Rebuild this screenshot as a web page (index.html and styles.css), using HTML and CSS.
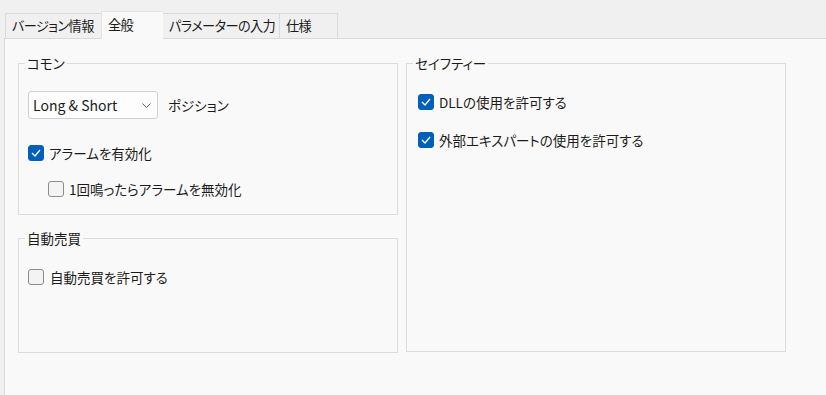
FILE: index.html
```html
<!DOCTYPE html>
<html lang="ja">
<head>
    <meta charset="UTF-8">
    <title>全般</title>
    <link rel="stylesheet" href="styles.css">
</head>
<body>
    <div class="tabs">
        <div class="tab tab-version">バージョン情報</div>
        <div class="tab tab-general active">全般</div>
        <div class="tab tab-params">パラメーターの入力</div>
        <div class="tab tab-spec">仕様</div>
    </div>
    <div class="panel">
        <div class="columns">
            <div class="left">
                <fieldset class="group group-common">
                    <legend>コモン</legend>
                    <div class="combo-row">
                        <div class="combo">
                            <span>Long &amp; Short</span>
                            <svg class="chevron" width="9" height="5" viewBox="0 0 9 5"><polyline points="0.5,0.5 4.5,4.5 8.5,0.5" fill="none" stroke="#606060" stroke-width="1"/></svg>
                        </div>
                        <span class="combo-label">ポジション</span>
                    </div>
                    <label class="check check-alarm"><span class="box checked"><svg width="10" height="8" viewBox="0 0 10 8"><polyline points="1,4 4,7 9,1" fill="none" stroke="#fff" stroke-width="1.3"/></svg></span>アラームを有効化</label>
                    <label class="check check-once"><span class="box"></span>1回鳴ったらアラームを無効化</label>
                </fieldset>
                <fieldset class="group group-auto">
                    <legend>自動売買</legend>
                    <label class="check check-auto"><span class="box"></span>自動売買を許可する</label>
                </fieldset>
            </div>
            <fieldset class="group group-safety">
                <legend>セイフティー</legend>
                <label class="check check-dll"><span class="box checked"><svg width="10" height="8" viewBox="0 0 10 8"><polyline points="1,4 4,7 9,1" fill="none" stroke="#fff" stroke-width="1.3"/></svg></span>DLLの使用を許可する</label>
                <label class="check check-expert"><span class="box checked"><svg width="10" height="8" viewBox="0 0 10 8"><polyline points="1,4 4,7 9,1" fill="none" stroke="#fff" stroke-width="1.3"/></svg></span>外部エキスパートの使用を許可する</label>
            </fieldset>
        </div>
    </div>
</body>
</html>
```

FILE: styles.css
```css
body {
    margin: 0;
    background-color: #f0f0f0;
    font-family: "Noto Sans CJK JP", "Noto Sans", sans-serif;
    font-size: 13.5px;
    font-feature-settings: "palt";
    color: #1b1b1b;
    height: 395px;
    overflow: hidden;
}

.tabs {
    display: flex;
    align-items: flex-end;
    padding: 11px 0 0 5px;
    height: 27px;
}

.tab {
    box-sizing: border-box;
    height: 25px;
    line-height: 23px;
    padding-left: 6px;
    border: 1px solid #d9d9d9;
    border-bottom: none;
    border-right: none;
    background-color: #f0f0f0;
    white-space: nowrap;
    overflow: hidden;
    font-size: 13.2px;
    letter-spacing: -0.6px;
}

.tab:last-child {
    border-right: 1px solid #d9d9d9;
}

.tab-version { width: 96px; }
.tab-general { width: 62px; }
.tab-params { width: 116px; }
.tab-spec { width: 59px; }

.tab.active {
    height: 28px;
    line-height: 25px;
    background-color: #f9f9f9;
    border-color: #e3e3e3;
    margin-bottom: -1px;
    position: relative;
}

.tab.active + .tab {
    border-left: none;
}

.panel {
    box-sizing: border-box;
    background-color: #f9f9f9;
    border-top: 1px solid #d9d9d9;
    border-left: 1px solid #d9d9d9;
    margin-left: 4px;
    height: 357px;
    padding: 14px 0 0 13px;
}

.columns {
    display: flex;
    gap: 8px;
    align-items: stretch;
}

.left {
    display: flex;
    flex-direction: column;
    gap: 13px;
}

.group {
    box-sizing: border-box;
    width: 380px;
    margin: 0;
    padding: 0 0 0 9px;
    border: 1px solid #dcdcdc;
    min-width: 0;
}

.group legend {
    margin-left: -3px;
    padding: 0 2px;
    line-height: 20px;
}

.group-common {
    padding-bottom: 15px;
}

.group-auto {
    height: 125px;
}

.group-safety {
    height: 299px;
}

.combo-row {
    display: flex;
    align-items: center;
    margin-top: 18px;
}

.combo {
    box-sizing: border-box;
    width: 130px;
    height: 28px;
    display: flex;
    align-items: center;
    justify-content: space-between;
    padding: 0 6px 0 4px;
    border: 1px solid #d0d0d0;
    border-radius: 3px;
    background-color: #fdfdfd;
    font-size: 14px;
    font-feature-settings: normal;
}

.chevron {
    margin-top: 1px;
}

.combo-label {
    margin-left: 10px;
}

.check {
    display: flex;
    align-items: center;
    height: 20px;
    white-space: nowrap;
}

.box {
    box-sizing: border-box;
    width: 16px;
    height: 16px;
    border: 1px solid #8c8c8c;
    border-radius: 3px;
    background-color: #f3f3f3;
    margin-right: 5px;
    display: flex;
    align-items: center;
    justify-content: center;
}

.box.checked {
    background-color: #005fb8;
    border-color: #005fb8;
}

.check-alarm { margin-top: 24px; }
.check-once { margin-top: 16px; margin-left: 20px; }
.check-auto { margin-top: 19px; }
.check-auto .box { margin-right: 6px; }
.check-dll { margin-top: 19px; margin-left: 2px; }
.check-expert { margin-top: 18px; margin-left: 2px; }
```
